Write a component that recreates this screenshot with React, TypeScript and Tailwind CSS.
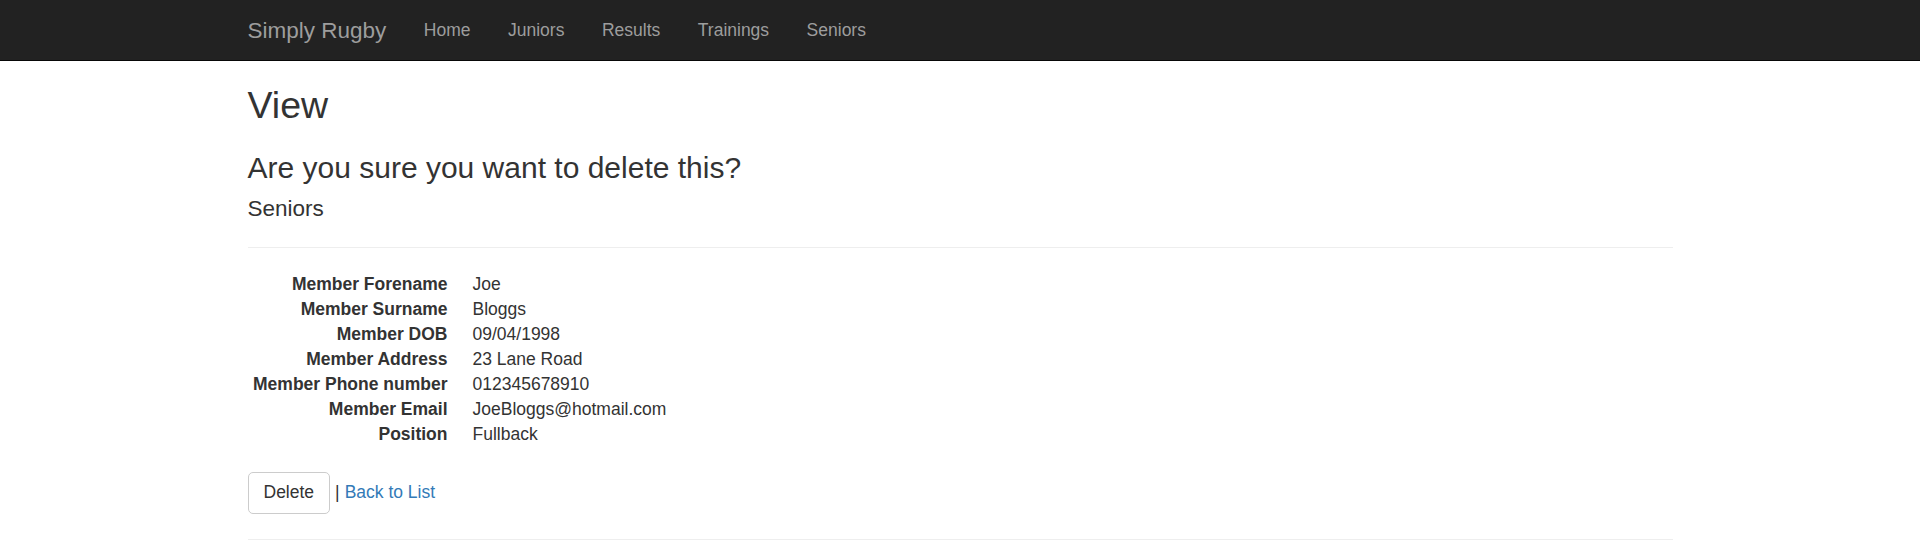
import React from 'react';

const navLinks = ['Home', 'Juniors', 'Results', 'Trainings', 'Seniors'];

const details: [string, string][] = [
  ['Member Forename', 'Joe'],
  ['Member Surname', 'Bloggs'],
  ['Member DOB', '09/04/1998'],
  ['Member Address', '23 Lane Road'],
  ['Member Phone number', '012345678910'],
  ['Member Email', 'JoeBloggs@hotmail.com'],
  ['Position', 'Fullback'],
];

export default function App() {
  return (
    <div
      className="min-h-[548px] bg-white text-[#333] text-[17.5px] leading-[25px]"
      style={{ fontFamily: '"Liberation Sans", Arial, Helvetica, sans-serif' }}
    >
      {/* Navbar */}
      <nav className="h-[61px] bg-[#222] border-b border-[#080808]">
        <div className="w-[1462.5px] mx-auto px-[18.75px] flex items-center h-full">
          <a className="-ml-[18.75px] px-[18.75px] text-[22.5px] leading-[25px] text-[#9d9d9d]" href="#">
            Simply Rugby
          </a>
          <ul className="flex">
            {navLinks.map((link) => (
              <li key={link}>
                <a className="block px-[18.75px] text-[17.5px] leading-[25px] text-[#9d9d9d]" href="#">
                  {link}
                </a>
              </li>
            ))}
          </ul>
        </div>
      </nav>

      {/* Body content */}
      <div className="w-[1462.5px] mx-auto px-[18.75px]">
        <h2 className="mt-[24px] text-[37.5px] leading-[41.25px] font-normal">View</h2>
        <h3 className="mt-[25px] text-[30px] leading-[33px] font-normal">
          Are you sure you want to delete this?
        </h3>
        <div>
          <h4 className="mt-[12.5px] text-[22.5px] leading-[24.75px] font-normal">Seniors</h4>
          <hr className="mt-[25px] mb-[24px] border-t border-[#eee]" />
          <dl className="grid grid-cols-[200px_1fr] gap-x-[25px]">
            {details.map(([label, value]) => (
              <React.Fragment key={label}>
                <dt className="text-right font-bold whitespace-nowrap overflow-hidden">{label}</dt>
                <dd>{value}</dd>
              </React.Fragment>
            ))}
          </dl>
        </div>

        <div className="mt-[25px] flex items-center">
          <button
            type="button"
            className="h-[42.5px] px-[15px] bg-white border border-[#ccc] rounded-[5px] text-[17.5px] text-[#333]"
          >
            Delete
          </button>
          <span className="ml-[5px]">|</span>
          <a className="ml-[5px] text-[#337ab7]" href="#">
            Back to List
          </a>
        </div>

        <hr className="mt-[25px] border-t border-[#eee]" />
      </div>
    </div>
  );
}
